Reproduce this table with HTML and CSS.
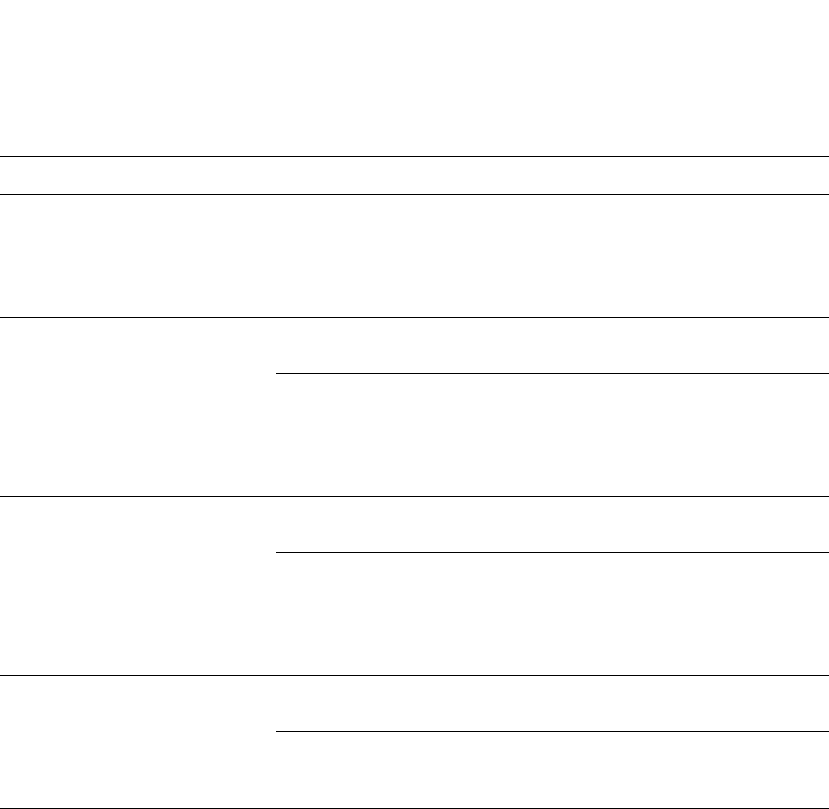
FILE: index.html
```html
<!DOCTYPE html>
<html lang="en">
<head>
<meta charset="utf-8">
<title>Table</title>
<link rel="stylesheet" href="styles.css">
</head>
<body>
<div class="table">
  <div class="row head"></div>
  <div class="row single"></div>
  <div class="row group">
    <div class="label"></div>
    <div class="subs">
      <div class="sub short"></div>
      <div class="sub tall"></div>
    </div>
  </div>
  <div class="row group">
    <div class="label"></div>
    <div class="subs">
      <div class="sub short"></div>
      <div class="sub tall"></div>
    </div>
  </div>
  <div class="row group">
    <div class="label"></div>
    <div class="subs">
      <div class="sub short"></div>
      <div class="sub last"></div>
    </div>
  </div>
</div>
</body>
</html>
```

FILE: styles.css
```css
html, body {
  margin: 0;
  padding: 0;
  background: #ffffff;
  font-family: "Liberation Sans", Arial, sans-serif;
}

.table {
  margin-top: 156px;
  border-top: 1px solid #000;
  display: flex;
  flex-direction: column;
}

.row {
  border-bottom: 1px solid #000;
}

.head {
  height: 37px;
}

.single {
  height: 122px;
}

.group {
  display: flex;
}

.label {
  width: 276px;
  flex: none;
}

.subs {
  flex: 1;
  display: flex;
  flex-direction: column;
}

.sub.short {
  height: 55px;
  border-bottom: 1px solid #000;
}

.sub.tall {
  height: 122px;
}

.sub.last {
  height: 76px;
}
```
